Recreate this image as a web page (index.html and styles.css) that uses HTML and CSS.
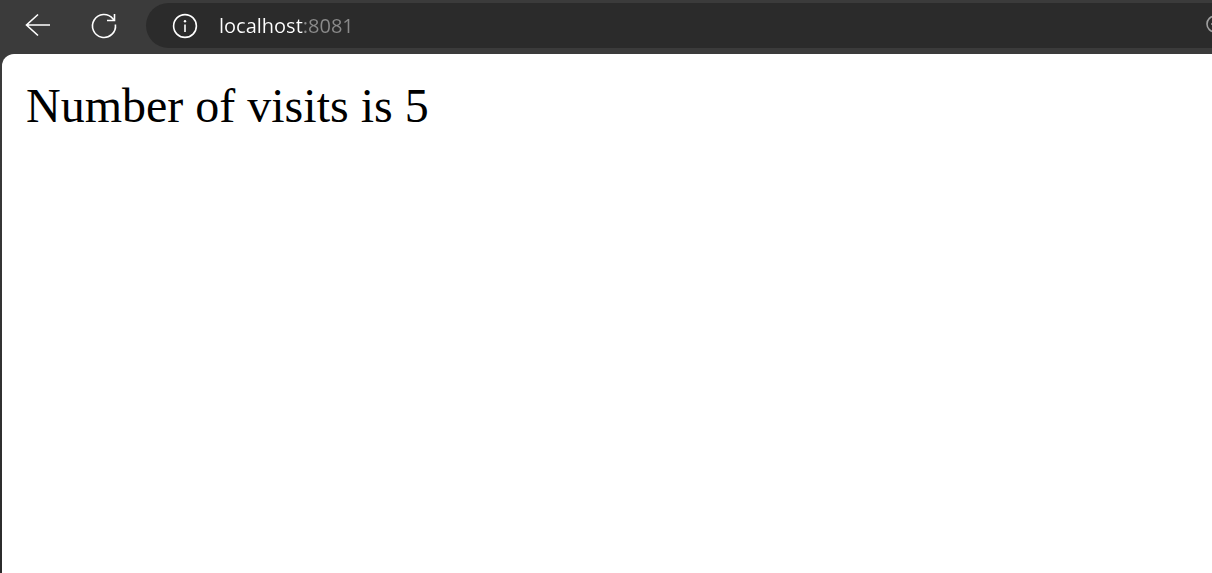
FILE: index.html
```html
<!DOCTYPE html>
<html lang="en">
<head>
<meta charset="utf-8">
<meta name="viewport" content="width=device-width, initial-scale=1">
<title>localhost:8081</title>
<link rel="stylesheet" href="styles.css">
</head>
<body class="browser">
  <header class="toolbar">
    <button class="tool" type="button" aria-label="Back">
      <svg class="icon" viewBox="0 0 28 28" aria-hidden="true"><path d="M26 13H2.500M14 2.500L2.500 13L14 23.500"/></svg>
    </button>
    <button class="tool" type="button" aria-label="Refresh">
      <svg class="icon" viewBox="0 0 28 28" aria-hidden="true"><path d="M25.400 12.500A11.500 11.500 0 1 1 22.900 6.700L24.500 8.500M24.500 2V8.500H17"/></svg>
    </button>
    <form class="address">
      <button class="info" type="button" aria-label="View site information">
        <svg class="icon" viewBox="0 0 28 28" aria-hidden="true"><circle cx="14" cy="14" r="11.400"/><path d="M14 12.500V20"/><circle class="dot" cx="14" cy="9.300" r="1.200"/></svg>
      </button>
      <input class="url" type="text" aria-label="Address" value="localhost:8081" spellcheck="false">
      <button class="zoom" type="button" aria-label="Zoom">
        <svg class="icon" viewBox="0 0 28 28" aria-hidden="true"><circle cx="11" cy="12" r="8"/><path d="M7 12H15M11 8V16M17 18L24 25"/></svg>
      </button>
    </form>
  </header>
  <main class="page">
    <p class="message">Number of visits is 5</p>
  </main>
</body>
</html>
```
FILE: styles.css
```css
* {
  box-sizing: border-box;
}

.browser {
  display: flex;
  flex-direction: column;
  min-height: 100vh;
  margin: 0;
  overflow-x: hidden;
  background: linear-gradient(#3b3b3b 60px, #2b2b2b);
}

.toolbar {
  display: flex;
  align-items: center;
  gap: 38px;
  padding: 3px 0 6px 24px;
}

.tool,
.info,
.zoom {
  flex: none;
  display: flex;
  padding: 0;
  border: 0;
  background: none;
  color: #fff;
}

.icon {
  width: 28px;
  height: 28px;
  fill: none;
  stroke: currentColor;
  stroke-width: 1.6;
}

.dot {
  fill: currentColor;
  stroke: none;
}

.address {
  flex: 1;
  display: flex;
  align-items: center;
  height: 45px;
  margin: 0 -20px 0 -10px;
  padding-left: 25px;
  border-radius: 23px 0 0 23px;
  background: #2b2b2b;
}

.url {
  flex: 1;
  min-width: 0;
  margin-left: 20px;
  padding: 0;
  border: 0;
  outline: 0;
  background: linear-gradient(to right, #fff 84px, #8b8b8b 84px);
  -webkit-background-clip: text;
  background-clip: text;
  color: #fff;
  -webkit-text-fill-color: transparent;
  font: 20px/28px "Open Sans", "Noto Sans", sans-serif;
}

.zoom {
  color: #a0a0a0;
}

.page {
  flex: 1;
  margin-left: 2px;
  padding: 24px;
  border-top-left-radius: 12px;
  background: #fff;
}

.message {
  margin: 0;
  color: #000;
  font: 48px/56px "Liberation Serif", "Times New Roman", serif;
}
```
